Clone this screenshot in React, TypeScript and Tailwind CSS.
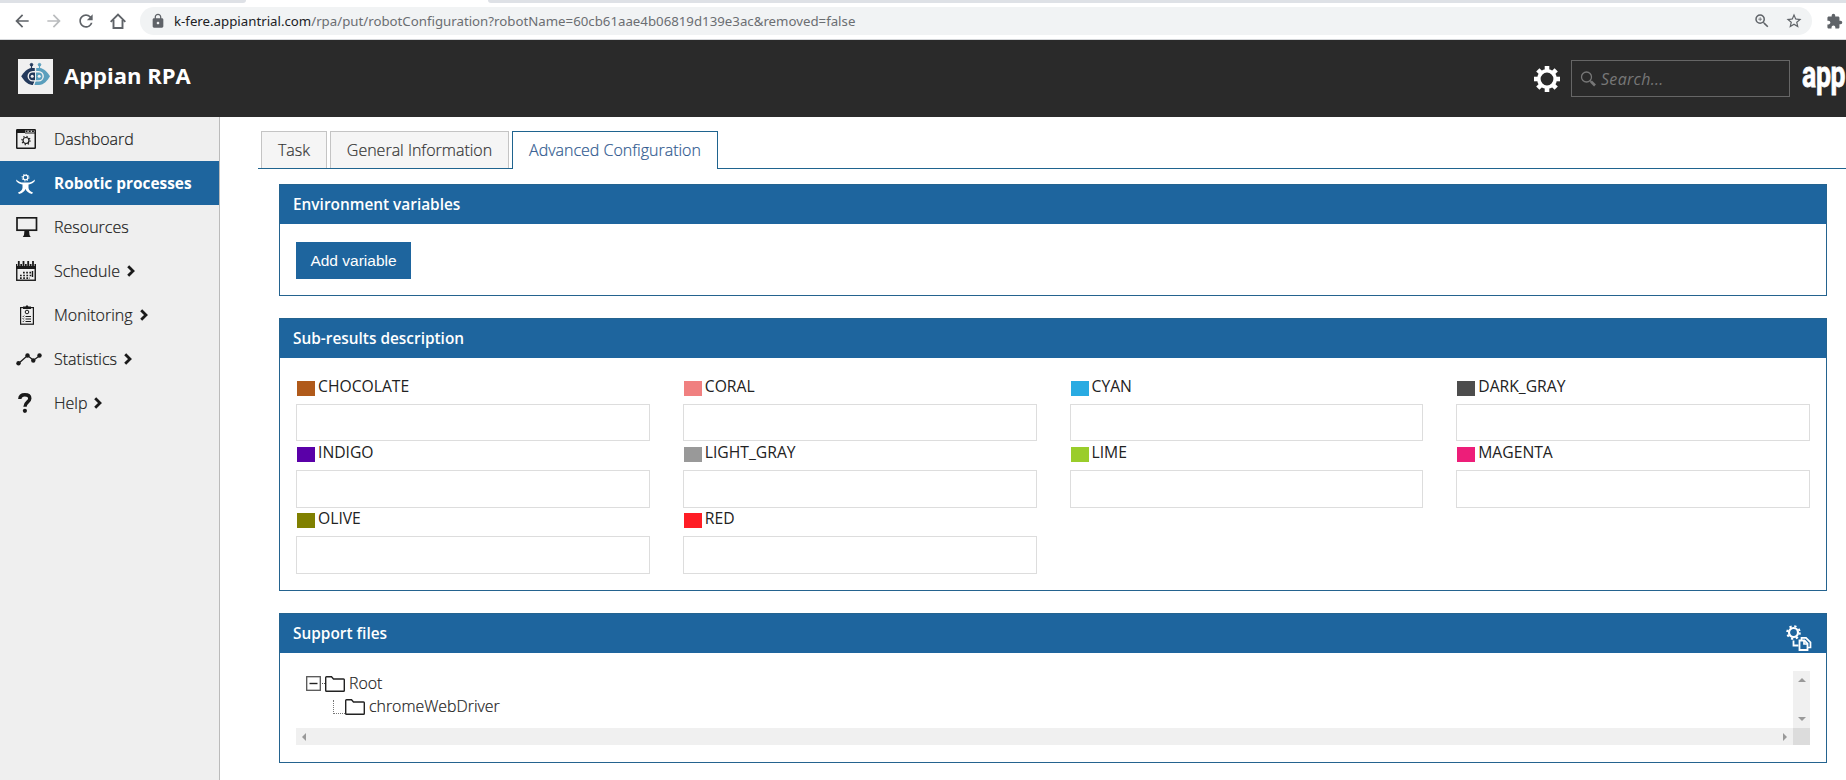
import type { ReactNode } from "react";
import {
  MdArrowBack,
  MdArrowForward,
  MdExtension,
  MdLock,
  MdRefresh,
  MdStarBorder,
  MdZoomIn,
} from "react-icons/md";

type NavItem = {
  label: string;
  icon: ReactNode;
  active?: boolean;
  expandable?: boolean;
};

const teeth = [0, 45, 90, 135, 180, 225, 270, 315];

function Gear({ className }: { className?: string }) {
  return (
    <svg viewBox="-13 -13 26 26" className={className} fill="none" stroke="currentColor">
      <circle r="8.2" strokeWidth="3.6" />
      {teeth.map((angle) => (
        <path key={angle} d="M0-9V-13" strokeWidth="4.6" transform={`rotate(${angle})`} />
      ))}
    </svg>
  );
}

function BotLogo() {
  return (
    <svg viewBox="0 0 35 35" className="size-[35px] bg-[#f0f0f0]">
      <g fill="#23395b" stroke="#23395b">
        <circle cx="13.5" cy="5.7" r="1.3" />
        <path d="M13.500 6v4" strokeWidth="1.200" />
        <path d="M17 9H13.500C9 9.500 6 13 3.200 17.300 6 21.500 9 25.500 14 26H15L17 21Z" stroke="none" />
      </g>
      <g fill="#5a9fbd" stroke="#5a9fbd">
        <circle cx="21.500" cy="5.7" r="1.300" />
        <path d="M21.500 6v4" strokeWidth="1.200" />
        <path d="M18 9H22C26 9.500 29.500 13 32 17.300 29.500 21.500 26 26 21 26H16.200L18 21Z" stroke="none" />
      </g>
      <rect x="10.200" y="12.700" width="15" height="9.200" rx="4.600" fill="none" stroke="#f0f0f0" strokeWidth="1.400" />
      <path d="M17.500 8.500V13" stroke="#f0f0f0" strokeWidth="1.400" />
      <path d="M17.300 21.500 15.500 26.500" stroke="#f0f0f0" strokeWidth="1" />
      <circle cx="14.200" cy="17.300" r="1.500" fill="#f0f0f0" />
      <circle cx="21.200" cy="17.300" r="1.500" fill="#f0f0f0" />
    </svg>
  );
}

function HomeIcon() {
  return (
    <svg viewBox="0 0 16 16" className="mx-0.5 h-4 w-4 shrink-0" fill="none" stroke="currentColor" strokeWidth="1.900">
      <path d="M.700 8.800 8 1.500l7.300 7.300" />
      <path d="M3.500 7v8h9V7" />
    </svg>
  );
}

function DashboardIcon() {
  return (
    <svg viewBox="0 0 20 20" className="size-5" fill="none" stroke="currentColor">
      <rect x="0.750" y="0.750" width="18.500" height="18.500" rx="0.500" strokeWidth="1.500" />
      <path d="M1 2.500H9" strokeWidth="3" />
      <path d="M9 4H19" strokeWidth="1" />
      <path d="M9.500 2.200H18" strokeWidth="1.600" strokeDasharray="2 1.200" />
      <circle cx="10" cy="11.500" r="3" strokeWidth="1.200" />
      <circle cx="10" cy="11.500" r="4.100" strokeWidth="1.200" strokeDasharray="1.200 2.020" />
    </svg>
  );
}

function RobotIcon() {
  return (
    <svg viewBox="0 0 19 20" className="h-5 w-[19px]" fill="none" stroke="currentColor">
      <circle cx="9.500" cy="3.500" r="2.400" strokeWidth="1.300" />
      <circle cx="9.500" cy="3.500" r="3.500" strokeWidth="1" strokeDasharray="1.200 1.550" />
      <path
        d="M0 5.500C3 8 5 8.500 7 8.500h5c2 0 4-.500 7-3l-.500 2C16 10 14 10.200 12.500 10.500V14c.300 2 2 3.500 4.500 4.500l-1 1.500c-3.500-1-5.500-2.500-6.500-5-1 2.500-3 4-6.500 5l-1-1.500c2.500-1 4.200-2.500 4.500-4.500v-3.500C5 10.200 3 10 .500 7.500Z"
        fill="currentColor"
        stroke="none"
      />
    </svg>
  );
}

function ResourcesIcon() {
  return (
    <svg viewBox="0 0 22 20" className="h-5 w-[22px]" fill="none" stroke="currentColor">
      <rect x="1" y="0.800" width="19.500" height="12.400" strokeWidth="1.700" />
      <path d="M8.500 13h4.500l.500 5 1.200 2H6.800L8 18Z" fill="currentColor" stroke="none" />
    </svg>
  );
}

function ScheduleIcon() {
  return (
    <svg viewBox="0 0 20 20" className="size-5" fill="none" stroke="currentColor">
      <rect x="0.750" y="4" width="18.500" height="15.250" strokeWidth="1.400" />
      <path d="M0 5.500H20" strokeWidth="5" />
      <path d="M2.800 1V5M7.500 1V5M12.200 1V5M17 1V5" strokeWidth="3" stroke="#efefef" />
      <path d="M2.800 0V5M7.500 0V5M12.200 0V5M17 0V5" strokeWidth="1.800" />
      <path d="M7 11.700H17M4 14.500H17M4 17.200H14" strokeWidth="1.700" strokeDasharray="1.700 1.500" />
      <path d="M16.500 10V16" strokeWidth="1.400" />
    </svg>
  );
}

function MonitoringIcon() {
  return (
    <svg viewBox="0 0 14 20" className="ml-1 h-5 w-3.5" fill="none" stroke="currentColor">
      <rect x="0.600" y="2.600" width="12.800" height="16.600" strokeWidth="1.200" />
      <path d="M3 1.500H5.500L7 0l1.500 1.500H11V4H3Z" fill="currentColor" stroke="none" />
      <circle cx="7" cy="7" r="1.800" />
      <path d="M5.500 11.500H11M5.500 14H11M5.500 16.500H11" />
      <path
        d="M2.500 11l.700.700 1.200-1.200M2.500 13.500l.700.700 1.200-1.200M2.500 16l.700.700 1.200-1.200"
        strokeWidth=".8"
      />
    </svg>
  );
}

function StatisticsIcon() {
  return (
    <svg viewBox="0 0 26 14" className="h-3.5 w-[26px]" fill="currentColor" stroke="currentColor">
      <path d="M2.500 11.500 11.500 3.500 17.500 8.300 24 3.500" fill="none" strokeWidth="1.300" />
      <g stroke="none">
        <circle cx="2.500" cy="11.300" r="2.200" />
        <circle cx="11.500" cy="3.500" r="2.200" />
        <circle cx="17.300" cy="8.500" r="2.200" />
        <circle cx="23.500" cy="3.500" r="2.200" />
      </g>
    </svg>
  );
}

function HelpIcon() {
  return (
    <svg viewBox="0 0 14 20" className="ml-0.5 h-5 w-3.5" fill="none" stroke="currentColor">
      <path d="M1.800 6C2 3 4 1.800 6.800 1.800c3 0 5 1.400 5 3.700C11.800 9 7 8.800 7 13.800" strokeWidth="3.400" />
      <circle cx="6.900" cy="17.800" r="2.100" fill="currentColor" stroke="none" />
    </svg>
  );
}

function Chevron() {
  return (
    <svg viewBox="0 0 8 12" className="ml-[7px] h-3 w-2" fill="none" stroke="currentColor" strokeWidth="2.800">
      <path d="M1.200 1.200 6 6 1.200 10.800" />
    </svg>
  );
}

function FolderIcon() {
  return (
    <svg viewBox="0 0 20 16" className="h-4 w-5 shrink-0" fill="none" stroke="#222" strokeWidth="1.400">
      <path d="M.700 14.500V1.500q0-.800.800-.800H6.500L8.500 3H18.500q.800 0 .800.800V14.500q0 .800-.800.800H1.500q-.800 0-.800-.800Z" />
    </svg>
  );
}

function FilesIcon() {
  return (
    <svg viewBox="0 0 26 26" className="size-[26px]" fill="none" stroke="white">
      <circle cx="7.500" cy="7.500" r="4.500" strokeWidth="2.200" />
      <circle cx="7.500" cy="7.500" r="6.300" strokeWidth="2" strokeDasharray="2.300 2.648" />
      <path d="M7.500 15.500V20.500H12.500" strokeWidth="1.800" />
      <path d="M13.500 15.500h5l3 3v6.500h-8Z" strokeWidth="1.800" />
      <path d="M15.500 15V12.800h4.500l4.500 4.500V22.500H22M18 15.500v3.500h3.500" strokeWidth="1.700" />
    </svg>
  );
}

const navItems: NavItem[] = [
  { label: "Dashboard", icon: <DashboardIcon /> },
  { label: "Robotic processes", icon: <RobotIcon />, active: true },
  { label: "Resources", icon: <ResourcesIcon /> },
  { label: "Schedule", icon: <ScheduleIcon />, expandable: true },
  { label: "Monitoring", icon: <MonitoringIcon />, expandable: true },
  { label: "Statistics", icon: <StatisticsIcon />, expandable: true },
  { label: "Help", icon: <HelpIcon />, expandable: true },
];

const subResults = [
  { name: "CHOCOLATE", color: "bg-[#b05a1a]" },
  { name: "CORAL", color: "bg-[#f08080]" },
  { name: "CYAN", color: "bg-[#29abe2]" },
  { name: "DARK_GRAY", color: "bg-[#4d4d4d]" },
  { name: "INDIGO", color: "bg-[#5a00a8]" },
  { name: "LIGHT_GRAY", color: "bg-[#999999]" },
  { name: "LIME", color: "bg-[#9acd2b]" },
  { name: "MAGENTA", color: "bg-[#ed1e79]" },
  { name: "OLIVE", color: "bg-[#808000]" },
  { name: "RED", color: "bg-[#ff1d25]" },
];

function BrowserBar() {
  return (
    <div className="h-10 border-b border-[#d5d7da] bg-white">
      <div className="flex h-[3px] justify-between">
        <div className="w-[246px] rounded-br-[3px] bg-[#dee1e6]" />
        <div className="w-[1358px] rounded-bl-[3px] bg-[#dee1e6]" />
      </div>
      <div className="mt-1 flex h-7 items-center text-[#5f6368]">
        <MdArrowBack className="ml-3 size-5" />
        <MdArrowForward className="ml-3 size-5 text-[#babcbe]" />
        <MdRefresh className="ml-3 size-5" />
        <div className="ml-3 flex w-5">
          <HomeIcon />
        </div>
        <div className="ml-3 flex h-7 w-[1672px] items-center rounded-full bg-[#f1f3f4] pr-[9px] pl-[10px]">
          <MdLock className="size-4" />
          <span className="ml-2 pt-px font-['Noto_Sans',sans-serif] text-[13.250px] text-[#6b6e72]">
            <span className="text-[#202124]">k-fere.appiantrial.com</span>
            /rpa/put/robotConfiguration?robotName=60cb61aae4b06819d139e3ac&amp;removed=false
          </span>
          <MdZoomIn className="ml-auto size-[18px]" />
          <MdStarBorder className="ml-3.5 size-[18px]" />
        </div>
        <MdExtension className="ml-3.5 size-[17px] shrink-0" />
      </div>
    </div>
  );
}

function Header() {
  return (
    <header className="flex h-[77px] items-center overflow-hidden bg-[#2a2a2a] text-white">
      <div className="-mt-1 ml-[18px]">
        <BotLogo />
      </div>
      <h1 className="-mt-1.5 ml-[11px] text-[22px] font-bold">Appian RPA</h1>
      <Gear className="ml-auto size-[26px]" />
      <div className="ml-[11px] flex h-[37px] w-[219px] items-center border border-[#666] pl-2 text-[#777]">
        <svg viewBox="0 0 16 16" className="size-4" fill="none" stroke="currentColor">
          <circle cx="6.500" cy="6" r="5" strokeWidth="1.300" />
          <path d="m10 9.500 1.500 1.500" strokeWidth="1.300" />
          <path d="m11 10.500 4 4" strokeWidth="2.600" />
        </svg>
        <span className="ml-[5px] text-base tracking-[0.300px] italic">Search...</span>
      </div>
      <div className="-mt-2 ml-3 w-11 font-['Roboto',sans-serif] text-[37px] leading-[50px] font-bold">
        <span className="inline-block origin-left scale-x-[0.720] tracking-[-0.500px] [-webkit-text-stroke:0.800px_white]">app</span>
      </div>
    </header>
  );
}

function Sidebar() {
  return (
    <nav className="w-[220px] shrink-0 border-r border-[#bbb] bg-[#efefef] text-[#1a1a1a]">
      {navItems.map((item) => (
        <a
          key={item.label}
          className={
            item.active
              ? "flex h-11 items-center bg-[#1e659e] pt-px pl-4 text-[15.400px] font-bold text-white"
              : "flex h-11 items-center pl-4 text-base font-light [-webkit-text-stroke:0.200px]"
          }
        >
          <span className="flex w-[38px] shrink-0">{item.icon}</span>
          <span>{item.label}</span>
          {item.expandable && <Chevron />}
        </a>
      ))}
    </nav>
  );
}

function Tabs() {
  return (
    <div className="flex h-[38px] gap-[3px] pl-[3px] text-base font-light shadow-[inset_0_-1px_0_#1f648f] [-webkit-text-stroke:0.200px]">
      <div className="mb-px flex w-[66px] items-center justify-center border border-b-0 border-[#c4c4c4] bg-[#f5f5f5] text-[#333]">
        Task
      </div>
      <div className="mb-px flex w-[179px] items-center justify-center border border-b-0 border-[#c4c4c4] bg-[#f5f5f5] text-[#333]">
        General Information
      </div>
      <div className="flex w-[206px] items-center justify-center border border-b-0 border-[#1f648f] bg-white pb-px text-[#305a8f]">
        Advanced Configuration
      </div>
    </div>
  );
}

function Panel({
  title,
  action,
  className,
  children,
}: {
  title: string;
  action?: ReactNode;
  className: string;
  children: ReactNode;
}) {
  return (
    <section className={`border border-[#24638f] ${className}`}>
      <div className="flex h-[39px] items-center justify-between bg-[#1e659e] pr-3.5 pl-[13px] text-[15.400px] font-semibold text-white">
        <h2 className="pt-px">{title}</h2>
        {action}
      </div>
      {children}
    </section>
  );
}

function SupportTree() {
  return (
    <div className="mt-[18px] ml-4 grid w-[1514px] grid-cols-[1497px_17px] grid-rows-[57px_17px] text-[#999]">
      <div className="pt-px pl-2.5 text-[15.900px] font-light text-[#222] [-webkit-text-stroke:0.200px]">
        <div className="flex h-[23px] items-center">
          <svg viewBox="0 0 19 15" className="h-[15px] w-[19px]" fill="none" stroke="#555">
            <rect x=".7" y=".7" width="13.600" height="13.600" strokeWidth="1.300" />
            <path d="M3.500 7.500h8" stroke="#222" strokeWidth="1.400" />
            <path d="M16 7.500h3" strokeDasharray="1 1" />
          </svg>
          <FolderIcon />
          <span className="ml-1">Root</span>
        </div>
        <div className="flex h-[23px] items-center pl-[27px]">
          <div className="h-3.5 w-3 border-b border-l border-dotted border-[#777]" />
          <FolderIcon />
          <span className="ml-1">chromeWebDriver</span>
        </div>
      </div>
      <div className="flex flex-col items-center justify-between bg-[#f0f0f0] py-[7px]">
        <svg viewBox="0 0 8 4" className="h-1 w-2" fill="currentColor">
          <path d="M0 4 4 0l4 4Z" />
        </svg>
        <svg viewBox="0 0 8 4" className="h-1 w-2" fill="currentColor">
          <path d="m0 0 4 4 4-4Z" />
        </svg>
      </div>
      <div className="flex items-center justify-between bg-[#f0f0f0] px-1.5">
        <svg viewBox="0 0 4 8" className="h-2 w-1" fill="currentColor">
          <path d="M4 0 0 4l4 4Z" />
        </svg>
        <svg viewBox="0 0 4 8" className="h-2 w-1" fill="currentColor">
          <path d="m0 0 4 4-4 4Z" />
        </svg>
      </div>
      <div className="bg-[#dcdcdc]" />
    </div>
  );
}

export default function App() {
  return (
    <div className="flex h-screen flex-col overflow-hidden bg-white font-['Open_Sans',sans-serif]">
      <BrowserBar />
      <Header />
      <div className="flex min-h-0 flex-1">
        <Sidebar />
        <main className="flex-1 pt-3.5 pl-[38px]">
          <Tabs />
          <div className="mt-[15px] ml-[21px] flex w-[1548px] flex-col gap-[22px]">
            <Panel title="Environment variables" className="h-28">
              <button className="mt-[18px] ml-4 h-[37px] w-[115px] bg-[#1e659e] pt-px font-['Liberation_Sans',sans-serif] text-[15.500px] text-white">
                Add variable
              </button>
            </Panel>

            <Panel title="Sub-results description" className="h-[273px]">
              <div className="mt-4 ml-4 grid w-[1514px] grid-cols-4 gap-x-[33px]">
                {subResults.map((result) => (
                  <div key={result.name} className="h-[66.200px]">
                    <div className="flex h-[30px] text-[15.700px] leading-[24px] text-[#222]">
                      <span className={`mt-[7px] mr-[3px] ml-px h-[15px] w-[18px] shrink-0 ${result.color}`} />
                      {result.name}
                    </div>
                    <input className="block h-[37.400px] w-full border border-[#ddd]" />
                  </div>
                ))}
              </div>
            </Panel>

            <Panel
              title="Support files"
              action={
                <div className="mt-2">
                  <FilesIcon />
                </div>
              }
              className="h-[150px]"
            >
              <SupportTree />
            </Panel>
          </div>
        </main>
      </div>
    </div>
  );
}
